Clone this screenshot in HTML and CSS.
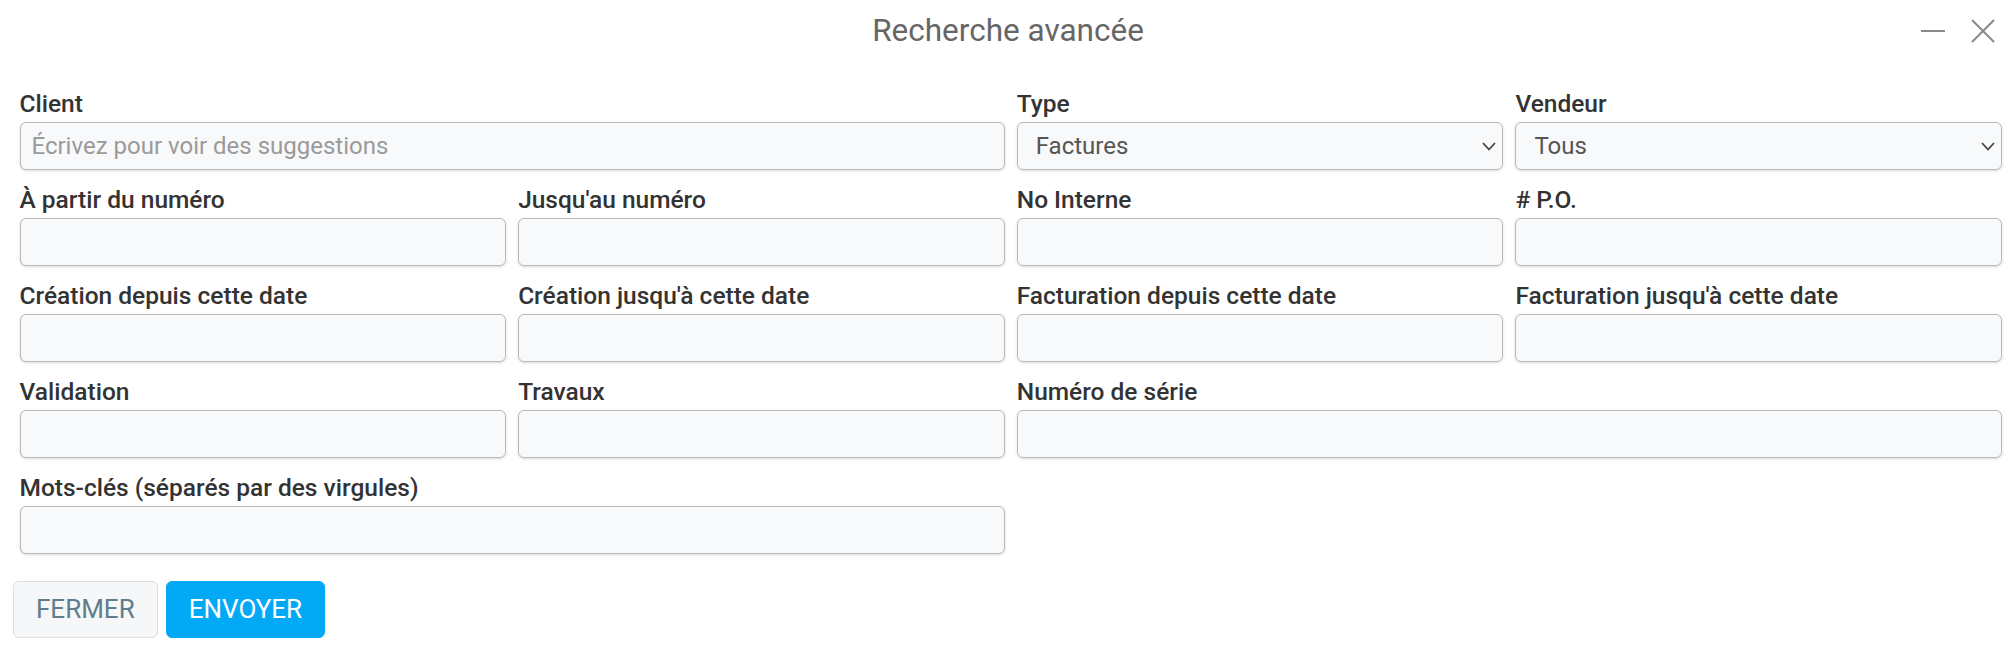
FILE: index.html
```html
<!DOCTYPE html>
<html lang="fr">
<head>
<meta charset="utf-8">
<title>Recherche avancée</title>
<link rel="stylesheet" href="styles.css">
</head>
<body>
<div class="dialog">
  <header class="header">
    <div class="spacer"></div>
    <h1 class="title">Recherche avancée</h1>
    <div class="controls">
      <button class="icon-btn" aria-label="Réduire">
        <svg width="24" height="24" viewBox="0 0 24 24"><line x1="0" y1="12" x2="24" y2="12" stroke="#8a8a8a" stroke-width="2"/></svg>
      </button>
      <button class="icon-btn" aria-label="Fermer">
        <svg width="24" height="24" viewBox="0 0 24 24"><path d="M1 1 L23 23 M23 1 L1 23" stroke="#8a8a8a" stroke-width="2" fill="none"/></svg>
      </button>
    </div>
  </header>

  <form class="form">
    <div class="field span2">
      <label class="label">Client</label>
      <input class="input" type="text" placeholder="Écrivez pour voir des suggestions">
    </div>
    <div class="field">
      <label class="label">Type</label>
      <div class="select-wrap">
        <select class="input select"><option>Factures</option></select>
        <svg class="chev" width="14" height="9" viewBox="0 0 14 9"><path d="M1 1 L7 7.5 L13 1" stroke="#444" stroke-width="1.8" fill="none"/></svg>
      </div>
    </div>
    <div class="field">
      <label class="label">Vendeur</label>
      <div class="select-wrap">
        <select class="input select"><option>Tous</option></select>
        <svg class="chev" width="14" height="9" viewBox="0 0 14 9"><path d="M1 1 L7 7.5 L13 1" stroke="#444" stroke-width="1.8" fill="none"/></svg>
      </div>
    </div>

    <div class="field"><label class="label">À partir du numéro</label><input class="input" type="text"></div>
    <div class="field"><label class="label">Jusqu'au numéro</label><input class="input" type="text"></div>
    <div class="field"><label class="label">No Interne</label><input class="input" type="text"></div>
    <div class="field"><label class="label"># P.O.</label><input class="input" type="text"></div>

    <div class="field"><label class="label">Création depuis cette date</label><input class="input" type="text"></div>
    <div class="field"><label class="label">Création jusqu'à cette date</label><input class="input" type="text"></div>
    <div class="field"><label class="label">Facturation depuis cette date</label><input class="input" type="text"></div>
    <div class="field"><label class="label">Facturation jusqu'à cette date</label><input class="input" type="text"></div>

    <div class="field"><label class="label">Validation</label><input class="input" type="text"></div>
    <div class="field"><label class="label">Travaux</label><input class="input" type="text"></div>
    <div class="field span2"><label class="label">Numéro de série</label><input class="input" type="text"></div>

    <div class="field span2"><label class="label">Mots-clés (séparés par des virgules)</label><input class="input" type="text"></div>
  </form>

  <footer class="footer">
    <button class="btn btn-light" type="button">FERMER</button>
    <button class="btn btn-primary" type="button">ENVOYER</button>
  </footer>
</div>
</body>
</html>
```

FILE: styles.css
```css
* { box-sizing: border-box; }

html, body {
  margin: 0;
  padding: 0;
  background: #ffffff;
  font-family: Roboto, "Liberation Sans", Arial, sans-serif;
}

.dialog {
  width: 2016px;
}

.header {
  display: grid;
  grid-template-columns: 1fr auto 1fr;
  align-items: center;
  height: 62px;
}

.title {
  margin: 0;
  font-size: 31.5px;
  font-weight: 400;
  line-height: 62px;
  color: #666666;
  text-align: center;
}

.controls {
  justify-self: end;
  display: flex;
  align-items: center;
  gap: 26px;
  margin-right: 21px;
}

.icon-btn {
  border: 0;
  background: none;
  padding: 0;
  width: 24px;
  height: 24px;
  display: block;
}
.icon-btn svg { display: block; }

.form {
  display: grid;
  grid-template-columns: repeat(4, 1fr);
  column-gap: 12px;
  row-gap: 15px;
  padding: 26.5px 14px 0 19.5px;
}

.field {
  display: flex;
  flex-direction: column;
  min-width: 0;
}

.span2 { grid-column: span 2; }

.label {
  font-size: 24.5px;
  font-weight: 500;
  line-height: 30px;
  color: #333333;
  margin-bottom: 3.5px;
  white-space: nowrap;
}

.input {
  width: 100%;
  height: 47.5px;
  border: 1px solid #b8b8b8;
  border-radius: 6px;
  background: #f8f9fa;
  box-shadow: 0 1px 3px rgba(0, 0, 0, 0.14);
  font-family: Roboto, "Liberation Sans", Arial, sans-serif;
  font-size: 24px;
  color: #555555;
  padding: 0 11px;
  outline: none;
}

.input::placeholder {
  color: #9a9a9a;
  opacity: 1;
}

.select-wrap {
  position: relative;
}

.select {
  appearance: none;
  -webkit-appearance: none;
  padding-left: 18px;
}

.chev {
  position: absolute;
  right: 7px;
  top: 19.5px;
  pointer-events: none;
}

.footer {
  display: flex;
  gap: 8px;
  padding: 27px 0 0 13px;
}

.btn {
  height: 57.5px;
  padding: 0 22px;
  border-radius: 6px;
  font-family: Roboto, "Liberation Sans", Arial, sans-serif;
  font-size: 26px;
  font-weight: 400;
  line-height: 1;
}

.btn-light {
  background: #f5f7f9;
  border: 1px solid #dcdfe2;
  color: #5f7d8c;
}

.btn-primary {
  background: #03a9f4;
  border: 1px solid #03a9f4;
  color: #ffffff;
}
```
